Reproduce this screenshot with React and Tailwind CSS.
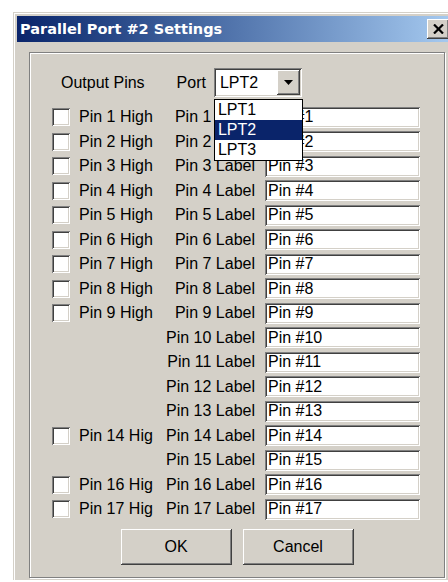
import { useState } from 'react';

const font = "font-['Liberation_Sans',Arial,sans-serif]";

// classic 3D bevels
const raised =
  'bg-[#d4d0c8] shadow-[inset_-1px_-1px_0_#404040,inset_1px_1px_0_#ffffff,inset_-2px_-2px_0_#808080,inset_2px_2px_0_#d4d0c8]';
const sunken =
  'bg-white shadow-[inset_1px_1px_0_#808080,inset_-1px_-1px_0_#ffffff,inset_2px_2px_0_#404040,inset_-2px_-2px_0_#d4d0c8]';

const PINS = [
  { n: 1, out: true },
  { n: 2, out: true },
  { n: 3, out: true },
  { n: 4, out: true },
  { n: 5, out: true },
  { n: 6, out: true },
  { n: 7, out: true },
  { n: 8, out: true },
  { n: 9, out: true },
  { n: 10, out: false },
  { n: 11, out: false },
  { n: 12, out: false },
  { n: 13, out: false },
  { n: 14, out: true },
  { n: 15, out: false },
  { n: 16, out: true },
  { n: 17, out: true },
];

const PORTS = ['LPT1', 'LPT2', 'LPT3'];

const PinRow = ({ pin, tall }) => (
  <div className={`flex items-center pl-[22px] ${tall ? 'h-[25px]' : 'h-[24px]'}`}>
    <div className="flex w-[101px] items-center gap-[9px]">
      {pin.out && (
        <>
          <span className={`block h-[18px] w-[18px] shrink-0 ${sunken}`} />
          <span className="block w-[74px] overflow-hidden whitespace-nowrap">Pin {pin.n} High</span>
        </>
      )}
    </div>
    <span className="block w-[102px] whitespace-nowrap text-right">Pin {pin.n} Label</span>
    <div className={`ml-[10px] flex h-[21px] w-[155px] items-center pl-[3px] ${sunken}`}>
      Pin #{pin.n}
    </div>
  </div>
);

export default function App() {
  const [port] = useState('LPT2');

  return (
    <div className={`h-[582px] w-[448px] overflow-hidden bg-white pl-[13px] pt-[12px] text-[16px] leading-none text-black ${font}`}>
      <div className="w-[445px] border-l border-t border-[#d4d0c8] bg-[#d4d0c8]">
        <div className="border-l border-t border-white p-[2px]">
          {/* title bar */}
          <div className="flex h-[26px] w-[434px] items-center justify-between bg-gradient-to-r from-[#0a246a] to-[#a6caf0] pl-[3px]">
            <span className="font-['DejaVu_Sans',Verdana,sans-serif] text-[14.5px] font-bold text-white">
              Parallel Port #2 Settings
            </span>
            <button className={`mr-[2px] flex h-[20px] w-[22px] items-center justify-center ${raised}`}>
              <svg width="11" height="10" viewBox="0 0 11 10">
                <path d="M1 0.5 L10 9.5 M10 0.5 L1 9.5" stroke="#000" strokeWidth="2.2" />
              </svg>
            </button>
          </div>

          {/* group box */}
          <div className="ml-[12px] mt-[10px] h-[526px] w-[416px] border border-[#808080] pt-[15px] shadow-[inset_1px_1px_0_#ffffff,1px_1px_0_#ffffff]">
            <div className="flex h-[29px] items-center pl-[31px]">
              <span>Output Pins</span>
              <span className="ml-[32px]">Port</span>
              <div className="relative ml-[8px]">
                <div className={`flex h-[29px] w-[88px] items-center justify-between pl-[6px] pr-[2px] ${sunken}`}>
                  <span className="pt-[1px]">{port}</span>
                  <span className={`flex h-[25px] w-[23px] items-center justify-center ${raised}`}>
                    <svg width="9" height="5" viewBox="0 0 9 5">
                      <path d="M0 0 H9 L4.5 5 Z" fill="#000" />
                    </svg>
                  </span>
                </div>
                <div className="absolute left-0 top-[31px] z-10 w-[89px] border border-black bg-white">
                  {PORTS.map((p) => (
                    <div
                      key={p}
                      className={`flex h-[20px] items-center pl-[3px] ${
                        p === port ? 'bg-[#0a246a] text-white' : ''
                      }`}
                    >
                      {p}
                    </div>
                  ))}
                </div>
              </div>
            </div>

            <div className="mt-[8px]">
              {PINS.map((pin, i) => (
                <PinRow key={pin.n} pin={pin} tall={i % 2 === 1} />
              ))}
            </div>

            <div className="mt-[8px] flex justify-center gap-[11px]">
              <button className={`flex h-[36px] w-[111px] items-center justify-center ${raised}`}>OK</button>
              <button className={`flex h-[36px] w-[111px] items-center justify-center ${raised}`}>Cancel</button>
            </div>
          </div>
        </div>
      </div>
    </div>
  );
}
